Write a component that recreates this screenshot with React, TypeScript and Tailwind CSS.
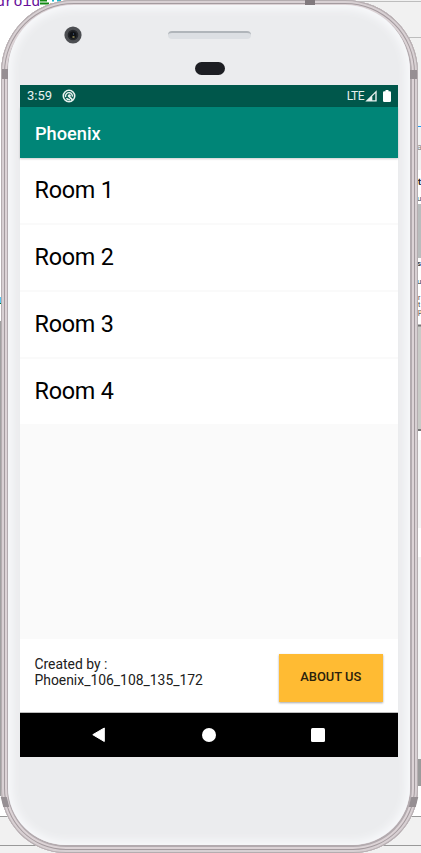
const rooms = ['Room 1', 'Room 2', 'Room 3', 'Room 4'];

function DesktopBehind() {
  return (
    <div className="absolute inset-0 bg-white">
      <svg className="absolute inset-0" width="421" height="853" viewBox="0 0 421 853">
        <rect x="354" y="0" width="67" height="170" fill="#f1f1f1" />
        <path d="M354 1.5h67M390 37.5h31" stroke="#bdbdbd" />
        <path d="M417 126.5h4" stroke="#2196f3" />
        <path d="M0 297h3v6H0z" fill="#55c8f5" />
        <path d="M0 303.5h3" stroke="#087a37" />
        <path d="M0 321h1v475H0z" fill="#a0a0a0" />
        <rect x="418" y="204" width="3" height="54" fill="#b9bdbd" />
        <rect x="418" y="325" width="3" height="105" fill="#c9cbc7" />
        <path d="M418 325.5h3M418 430h3" stroke="#777" strokeWidth="2" />
        <rect x="418" y="440" width="3" height="88" fill="#f4f4f4" />
        <rect x="418" y="557" width="3" height="202" fill="#f4f4f4" />
        <rect x="418" y="759" width="3" height="27" fill="#9b9b9b" />
        <rect x="0" y="816" width="421" height="37" fill="#f1f1f1" />
        <path d="M0 816.5h421M0 845.5h421" stroke="#999" />
        <path d="M40 3.5h9M40 .5h7" stroke="#128a12" strokeWidth="2" />
        <path d="M52 .5h2M57 .5h4" stroke="#18b4c8" strokeWidth="2" />
        <path d="M50 3.500h3" stroke="#e0d050" />
      </svg>
      <span className="absolute -left-[4px] -top-[5px] font-['Liberation_Mono'] text-[15px] leading-[16px] tracking-[-0.2px] text-[#660e9a]">
        droid
      </span>
      <div className="absolute left-[417px] top-[141px] font-['Roboto'] text-[9px] leading-[12px] text-[#888]">a</div>
      <div className="absolute left-[418px] top-[176px] font-['Roboto'] text-[9px] font-bold leading-[12px] text-[#222]">t</div>
      <div className="absolute left-[417px] top-[194px] font-['Roboto'] text-[8px] leading-[10px] text-[#555]">u</div>
      <div className="absolute left-[417px] top-[259px] font-['Roboto'] text-[8px] font-bold leading-[10px] text-[#444]">s</div>
      <div className="absolute left-[417px] top-[277px] font-['Roboto'] text-[8px] leading-[10px] text-[#444]">u</div>
      <div className="absolute left-[418px] top-[295px] font-['Roboto'] text-[7px] leading-[7px] text-[#444]">
        r<br />t<br />p
      </div>
    </div>
  );
}

function StatusBar() {
  return (
    <div className="flex h-[22px] shrink-0 items-center bg-[#00574b] pl-[7px] pr-[7px] text-white">
      <span className="w-[35px] text-[13px] leading-[22px] text-[#e8f1ef]">3:59</span>
      <svg width="14" height="14" viewBox="0 0 14 14" fill="none" stroke="#e8f1ef">
        <circle cx="7" cy="7" r="5.700" strokeWidth="1.600" />
        <path d="M3.600 8.200C3 5.200 5.200 3.300 7.600 3.700c2 .3 3 2 2.700 4" strokeWidth="1.400" />
        <path d="M6 6.300l4.500 4.500M4.400 9.300c1.100 1.400 2.400 1.600 3.600 1.400" strokeWidth="1.700" />
        <circle cx="7.500" cy="6.500" r="1.300" fill="#e8f1ef" stroke="none" />
      </svg>
      <span className="ml-auto text-[12px] leading-[22px] tracking-[-0.5px] text-[#e8f1ef]">LTE</span>
      <svg className="ml-[1px]" width="12" height="12" viewBox="0 0 12 12">
        <path d="M.3 11.600L11.700.3v11.300z" fill="#e8f1ef" />
        <path d="M7.300 6.300l3-3v6.900h-3z" fill="#00574b" />
      </svg>
      <svg className="ml-[6px]" width="8" height="12" viewBox="0 0 8 12">
        <path d="M2.500 0h3v1.200h1.300q1.200 0 1.200 1.200v8.400q0 1.200-1.200 1.200H1.200Q0 12 0 10.800V2.400Q0 1.200 1.200 1.200h1.300z" fill="white" />
      </svg>
    </div>
  );
}

function NavigationBar() {
  return (
    <div className="flex h-[44px] shrink-0 items-center bg-black">
      <svg className="ml-[72px]" width="13" height="16" viewBox="0 0 13 16">
        <path d="M12.300 1v13.500L.8 7.700z" fill="white" stroke="white" strokeLinejoin="round" />
      </svg>
      <div className="ml-[97px] size-[13.500px] rounded-full bg-white" />
      <div className="ml-[95.500px] size-[14px] rounded-[1.5px] bg-white" />
    </div>
  );
}

function Screen() {
  return (
    <main className="ml-[12px] flex h-[672px] w-[378px] shrink-0 flex-col bg-[#fafafa]">
      <StatusBar />
      <header className="z-10 flex h-[51px] shrink-0 items-center bg-[#008577] pl-[15px] pt-[2px] text-[18.200px] font-medium text-white shadow-[0_1px_2px_rgba(0,0,0,0.2)]">
        Phoenix
      </header>
      <ul className="flex h-[266px] shrink-0 flex-col gap-[2.500px]">
        {rooms.map((room) => (
          <li
            key={room}
            className="flex flex-1 items-center bg-white pl-[14.500px] pt-px text-[23.400px] leading-none tracking-[-0.25px] text-black"
          >
            {room}
          </li>
        ))}
      </ul>
      <footer className="mt-auto flex h-[74px] shrink-0 items-start justify-between border-b border-[#bdbdbd] bg-white pl-[14.500px] pr-[15px] pt-[15px]">
        <p className="pt-[2px] text-[13.900px] leading-[16px] text-[#202020]">
          Created by :<br />
          Phoenix_106_108_135_172
        </p>
        <button className="h-[48px] w-[104.500px] bg-[#ffbb33] pb-[2px] text-[12.900px] font-medium text-[#2b210b] shadow-[0_1px_2px_rgba(0,0,0,0.35)]">
          ABOUT US
        </button>
      </footer>
      <NavigationBar />
    </main>
  );
}

function Phone() {
  return (
    <div className="relative h-[853px] w-[417px] rounded-t-[73px] rounded-b-[65px] bg-[#d5cccf] pl-[7px] pr-[8px] pt-[5px] pb-[8px] shadow-[inset_0_0_0_1px_#b5adb0,inset_0_0_0_3px_#d8d0d3,inset_0_0_0_4px_#a49b9f,inset_0_0_0_6px_#dcd3d6,inset_0_0_0_8px_#b3abaf]">
      <div className="absolute left-px top-[69px] h-[10px] w-[6px] bg-[#968f93]" />
      <div className="absolute right-px top-[70px] h-[9px] w-[7px] bg-[#968f93]" />
      <div className="absolute left-px top-[797px] h-[10px] w-[6px] skew-x-[14deg] bg-[#968f93]" />
      <div className="absolute right-px top-[797px] h-[10px] w-[7px] skew-x-[-14deg] bg-[#968f93]" />
      <div className="absolute left-[304px] top-0 h-[5px] w-[10px] bg-[#81797d]" />
      <div className="relative flex h-full flex-col rounded-t-[66px] rounded-b-[58px] bg-[#ebecee] shadow-[inset_0_0_8px_4px_#f8f9fb]">
        <div className="flex h-[80px] shrink-0 items-start pl-[56px] pt-[21px]">
          <svg width="18" height="18" viewBox="0 0 18 18">
            <circle cx="9" cy="9" r="8.600" fill="#4c4e52" />
            <circle cx="9" cy="9" r="5.300" fill="#24262a" />
            <circle cx="9" cy="9" r="3.500" fill="#101216" />
            <path d="M8.500 10h2v2h-2z" fill="#777047" />
            <path d="M9 7h1v2H9z" fill="#324258" />
          </svg>
          <div className="ml-[86px] flex w-[83px] flex-col items-center pt-[5px]">
            <div className="h-[8px] w-full rounded-full border-t-2 border-[#b0b5ba] bg-[#dcdfe3]" />
            <div className="mt-[23px] h-[13px] w-[30px] rounded-full bg-[#1d1e23]" />
          </div>
        </div>
        <Screen />
      </div>
    </div>
  );
}

export default function App() {
  return (
    <div className="relative h-[853px] w-[421px] overflow-hidden font-['Roboto',sans-serif]">
      <DesktopBehind />
      <div className="relative flex pl-px">
        <Phone />
      </div>
    </div>
  );
}
